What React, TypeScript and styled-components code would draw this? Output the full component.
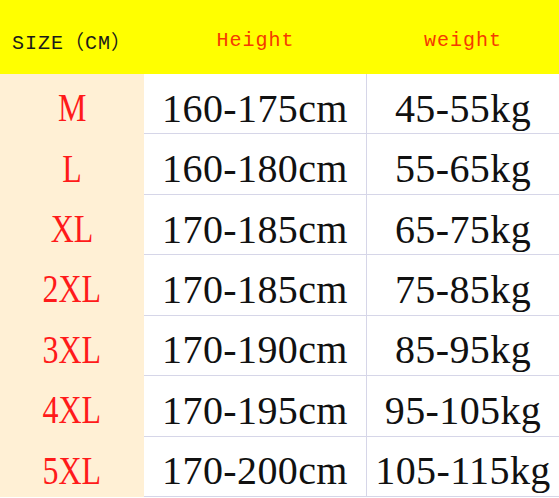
import React from 'react'
import styled, { createGlobalStyle } from 'styled-components'

const GlobalStyle = createGlobalStyle`
	html, body {
		margin: 0;
		padding: 0;
		background: #ffffff;
	}
`

const Table = styled.div`
	display: grid;
	grid-template-columns: 144px 223px 1fr;
	grid-template-rows: 74px repeat(7, 1fr);
	width: 559px;
	height: 497px;
`

const HeadCell = styled.div<{ $accent?: boolean }>`
	display: flex;
	align-items: center;
	justify-content: center;
	background: #ffff00;
	color: ${(p) => (p.$accent ? '#f53a00' : '#1a1a1a')};
	font-family: 'Liberation Mono', 'Noto Sans CJK SC', monospace;
	font-size: 20px;
	letter-spacing: 1px;
	padding-top: 6px;
	box-sizing: border-box;
`

const SizeCell = styled.div`
	display: flex;
	align-items: center;
	justify-content: center;
	background: #fff0d5;
	padding-top: 7px;
	box-sizing: border-box;
`

const SizeLabel = styled.span`
	display: inline-block;
	color: #ff1a1a;
	font-family: 'Liberation Serif', serif;
	font-size: 39px;
	transform: scaleX(0.82);
`

const ValueCell = styled.div<{ $divider?: boolean }>`
	display: flex;
	align-items: center;
	justify-content: center;
	background: #ffffff;
	border-bottom: 1px solid #d6d6e8;
	border-right: ${(p) => (p.$divider ? '1px solid #d6d6e8' : 'none')};
	box-sizing: border-box;
	color: #111111;
	font-family: 'Liberation Serif', serif;
	font-size: 40px;
	letter-spacing: 0.4px;
	padding-top: 9px;
	white-space: nowrap;
`

const rows = [
	{ size: 'M', height: '160-175cm', weight: '45-55kg' },
	{ size: 'L', height: '160-180cm', weight: '55-65kg' },
	{ size: 'XL', height: '170-185cm', weight: '65-75kg' },
	{ size: '2XL', height: '170-185cm', weight: '75-85kg' },
	{ size: '3XL', height: '170-190cm', weight: '85-95kg' },
	{ size: '4XL', height: '170-195cm', weight: '95-105kg' },
	{ size: '5XL', height: '170-200cm', weight: '105-115kg' },
]

const App = () => {
	return (
		<>
			<GlobalStyle />
			<Table>
				<HeadCell>SIZE（CM）</HeadCell>
				<HeadCell $accent>Height</HeadCell>
				<HeadCell $accent>weight</HeadCell>
				{rows.map((row) => (
					<React.Fragment key={row.size}>
						<SizeCell>
							<SizeLabel>{row.size}</SizeLabel>
						</SizeCell>
						<ValueCell $divider>{row.height}</ValueCell>
						<ValueCell>{row.weight}</ValueCell>
					</React.Fragment>
				))}
			</Table>
		</>
	)
}

export default App
